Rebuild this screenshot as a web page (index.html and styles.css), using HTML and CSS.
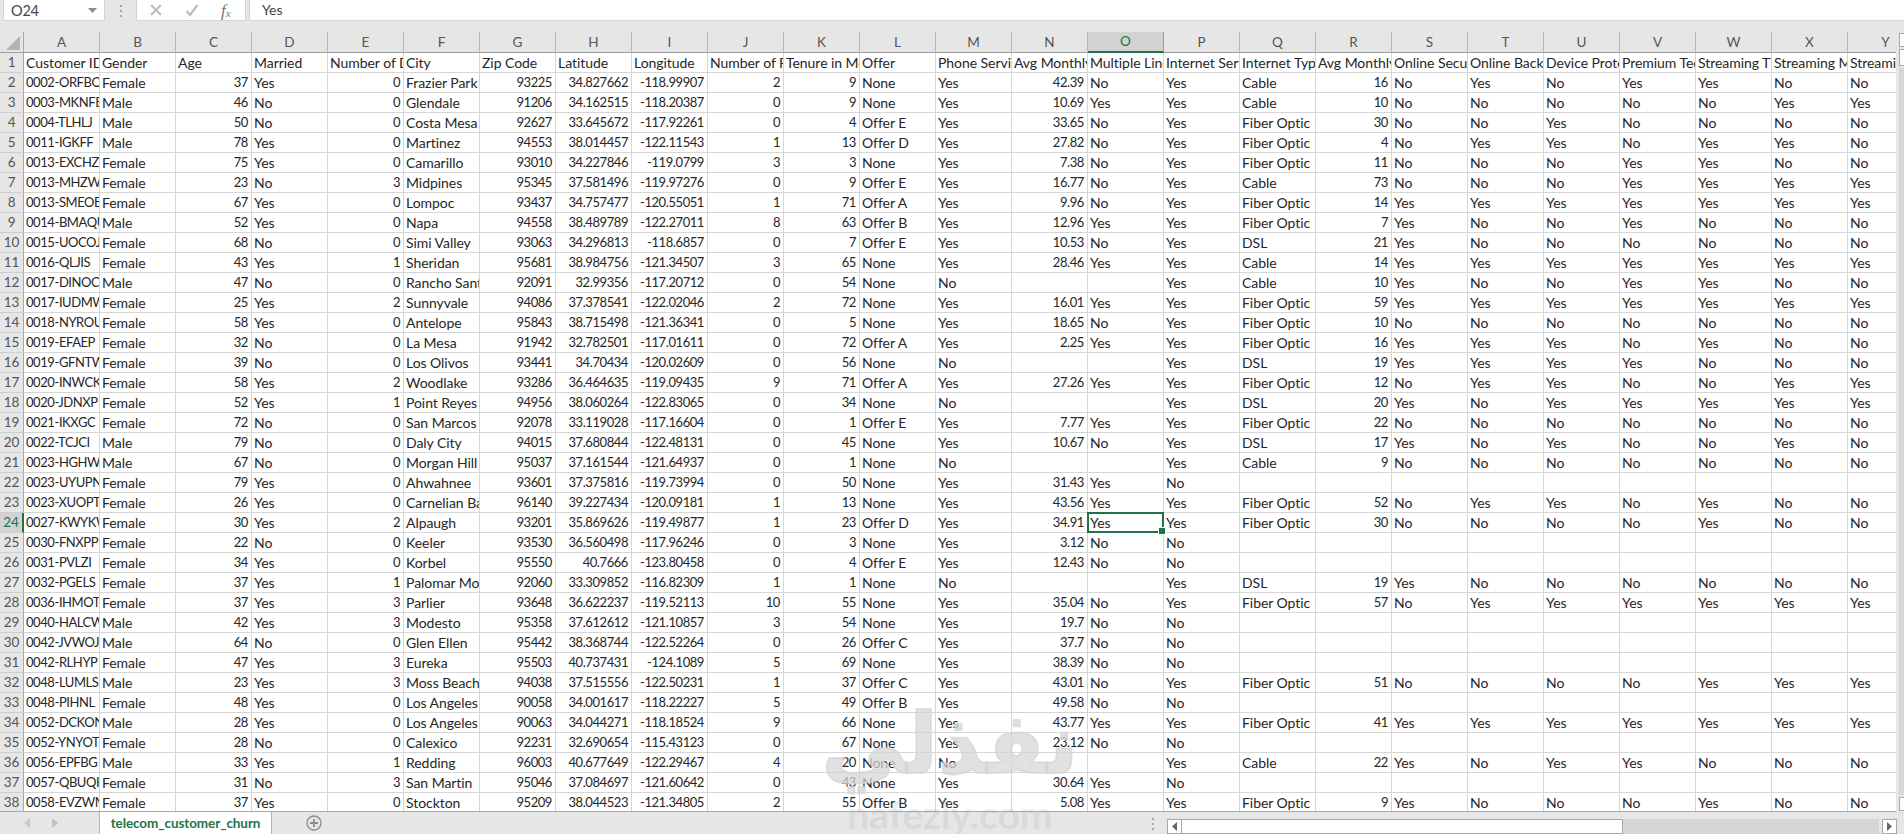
FILE: index.html
```html
<!DOCTYPE html>
<html lang="en">
<head>
<meta charset="utf-8">
<title>telecom_customer_churn</title>
<link rel="stylesheet" href="styles.css">
</head>
<body>
<div class="app">
  <div class="formula-bar">
    <div class="name-box"><span>O24</span><svg class="caret" width="9" height="5" viewBox="0 0 9 5"><path d="M0 0h9L4.500 5z"/></svg></div>
    <div class="grip"><i></i><i></i><i></i></div>
    <div class="fx-box">
      <svg width="14" height="14" viewBox="0 0 14 14"><path d="M2 2l10 10M12 2L2 12" stroke="#bdbdbd" stroke-width="2" fill="none"/></svg>
      <svg width="14" height="14" viewBox="0 0 14 14"><path d="M1.500 8l3.500 4L12.500 2" stroke="#bdbdbd" stroke-width="2.200" fill="none"/></svg>
      <span class="fx">f<sub>x</sub></span>
    </div>
    <div class="formula-input">Yes</div>
  </div>
  <div class="sheet-area">
    <div class="sheet">
      <table class="grid">
        <thead><tr id="head"><th class="corner"><svg width="14" height="14" viewBox="0 0 14 14"><path d="M14 0v14H0z" fill="#b4b4b4"/></svg></th></tr></thead>
        <tbody id="body"></tbody>
      </table>
    </div>
    <div class="vscroll">
      <div class="vbtn"></div>
      <div class="vthumb"></div>
      <div class="vspace"></div>
      <div class="vbtn"></div>
    </div>
  </div>
  <div class="tab-bar">
    <div class="tab-nav">
      <svg width="6" height="10" viewBox="0 0 6 10"><path d="M6 0v10L0 5z" fill="#c8c8c8"/></svg>
      <svg width="6" height="10" viewBox="0 0 6 10"><path d="M0 0v10l6-5z" fill="#c0c0c0"/></svg>
    </div>
    <div class="tab">telecom_customer_churn</div>
    <svg class="add" width="16" height="16" viewBox="0 0 16 16"><circle cx="8" cy="8" r="7" fill="none" stroke="#8a8a8a" stroke-width="1.300"/><path d="M8 4v8M4 8h8" stroke="#8a8a8a" stroke-width="1.800"/></svg>
    <div class="hscroll">
      <div class="grip bottom"><i></i><i></i><i></i></div>
      <div class="hbtn"><svg width="5" height="9" viewBox="0 0 5 9"><path d="M5 0v9L0 4.500z" fill="#666"/></svg></div>
      <div class="hthumb"></div>
      <div class="htrack"></div>
      <div class="hbtn right"><svg width="5" height="9" viewBox="0 0 5 9"><path d="M0 0v9l5-4.500z" fill="#666"/></svg></div>
    </div>
  </div>
  <div class="watermark"><div class="wm-ar" dir="rtl" lang="ar">نفذلي</div><div class="wm-en">nafezly.com</div></div>
</div>
<script src="app.js"></script>
</body>
</html>
```
FILE: styles.css
```css
* { box-sizing: border-box; }
html, body { margin: 0; height: 100%; overflow: hidden; }
body { font-family: "Lato", "Noto Sans", sans-serif; color: #262626; background: #e6e6e6; }
.app { position: relative; display: flex; flex-direction: column; width: 1904px; height: 834px; }

.formula-bar { display: flex; align-items: stretch; height: 32px; padding: 0 0 11px 3px; flex: none; }
.name-box { width: 102px; background: #fff; border: 1px solid #d4d4d4; border-top: 0; display: flex; align-items: center; justify-content: space-between; padding: 0 7px 0 7px; font-size: 14.500px; letter-spacing: -.2px; color: #444; }
.caret path { fill: #8c8c8c; }
.grip { width: 31px; display: flex; flex-direction: column; align-items: center; justify-content: center; gap: 3px; }
.grip i { width: 2px; height: 2px; background: #a6a6a6; display: block; }
.fx-box { width: 110px; background: #fff; border: 1px solid #d4d4d4; border-top: 0; display: flex; align-items: center; gap: 22px; padding-left: 12px; }
.fx { font-family: "Liberation Serif", serif; font-style: italic; font-size: 17px; color: #777; line-height: 1; }
.fx sub { font-size: 11px; vertical-align: -1px; }
.formula-input { flex: 1; margin-left: 3px; background: #fff; border: 1px solid #d4d4d4; border-width: 0 0 1px 1px; padding-left: 12px; font-size: 14px; letter-spacing: -.1px; line-height: 20px; color: #444; }

.sheet-area { display: flex; height: 780px; flex: none; }
.sheet { position: relative; width: 1896px; height: 780px; overflow: hidden; background: #fff; border-bottom: 1px solid #a8a8a8; }

.grid { border-collapse: separate; border-spacing: 0; table-layout: fixed; width: 1924px; font-size: 14px; letter-spacing: -.05px; }
.grid th, .grid td { height: 20px; padding: 0 2px; border-right: 1px solid #d6d6d6; border-bottom: 1px solid #d6d6d6; overflow: hidden; white-space: nowrap; line-height: 19px; font-weight: 400; width: 76px; }
.grid td.num { text-align: right; padding-right: 3px; font-size: 13px; letter-spacing: -.42px; }
.grid td.id { font-size: 13px; letter-spacing: -.42px; }
.grid thead th { background: #e6e6e6; color: #555; text-align: center; border-right-color: #b4b4b4; border-bottom: 1px solid #9c9c9c; font-size: 13.500px; letter-spacing: 0; }
.grid thead th.active { background: #d2d2d2; color: #217346; border-bottom: 2px solid #217346; border-right-color: #9c9c9c; }
.grid th.corner { width: 24px; padding: 2px 3px 0 6px; line-height: 0; text-align: right; border-right-color: #a8a8a8; }
.grid tbody th { width: 24px; background: #e6e6e6; color: #555; text-align: center; padding: 0; border-right-color: #a8a8a8; border-bottom-color: #cfcfcf; font-size: 13.500px; letter-spacing: -.2px; }
.grid tbody th.active { background: #d2d2d2; color: #217346; border-right: 2px solid #217346; }
.grid td.sel { position: relative; overflow: visible; }
.grid td.sel::after { content: ""; position: absolute; left: -1px; top: -1px; right: -1px; bottom: -1px; border: 2px solid #217346; }
.grid td.sel::before { content: ""; position: absolute; right: -3px; bottom: -3px; width: 6px; height: 6px; background: #217346; border: 1px solid #fff; z-index: 2; }

.watermark { position: absolute; left: 820px; top: 692px; width: 260px; text-align: center; pointer-events: none; }
.wm-ar { font-family: "DejaVu Sans", sans-serif; font-weight: 700; font-size: 84px; line-height: 104px; color: rgba(214, 214, 214, .72); -webkit-text-stroke: 2px rgba(214, 214, 214, .72); }
.wm-en { font-size: 39px; line-height: 36px; font-weight: 700; color: rgba(150, 150, 150, .18); }

.vscroll { width: 8px; flex: none; display: flex; flex-direction: column; gap: 2px; padding: 1px 0 1px 3px; background: #e6e6e6; }
.vbtn { height: 14px; background: #fff; border: 1px solid #a8a8a8; border-right: 0; flex: none; }
.vthumb { height: 17px; background: #fff; border: 1px solid #a8a8a8; border-right: 0; flex: none; }
.vspace { flex: 1; background: #d6d6d6; }

.tab-bar { flex: 1; display: flex; align-items: stretch; background: #e6e6e6; }
.tab-nav { width: 99px; display: flex; align-items: center; gap: 22px; padding-left: 24px; }
.tab { width: 173px; background: #fff; border: 1px solid #b4b4b4; border-width: 0 1px; text-align: center; font-weight: 700; font-size: 13.500px; letter-spacing: -.08px; line-height: 22px; color: #217346; }
.add { align-self: center; margin-left: 34px; }
.hscroll { margin-left: auto; width: 766px; display: flex; align-items: flex-end; padding-right: 7px; }
.grip.bottom { width: 29px; height: 20px; flex: none; }
.hbtn { width: 15px; height: 15px; flex: none; background: #fff; border: 1px solid #a8a8a8; display: flex; align-items: center; justify-content: center; }
.hthumb { width: 441px; height: 15px; flex: none; background: #fff; border: 1px solid #a8a8a8; border-left: 0; }
.htrack { flex: 1; height: 15px; background: #d6d6d6; }
.hbtn.right { margin-left: 3px; }
```
FILE: app.js
```js
var headers = ["Customer ID","Gender","Age","Married","Number of Dependents","City","Zip Code","Latitude","Longitude","Number of Referrals","Tenure in Months","Offer","Phone Service","Avg Monthly Long Distance Charges","Multiple Lines","Internet Service","Internet Type","Avg Monthly GB Download","Online Security","Online Backup","Device Protection Plan","Premium Tech Support","Streaming TV","Streaming Movies","Streaming Music"];
var data = `0002-ORFBO,Female,37,Yes,0,Frazier Park,93225,34.827662,-118.99907,2,9,None,Yes,42.39,No,Yes,Cable,16,No,Yes,No,Yes,Yes,No,No
0003-MKNFE,Male,46,No,0,Glendale,91206,34.162515,-118.20387,0,9,None,Yes,10.69,Yes,Yes,Cable,10,No,No,No,No,No,Yes,Yes
0004-TLHLJ,Male,50,No,0,Costa Mesa,92627,33.645672,-117.92261,0,4,Offer E,Yes,33.65,No,Yes,Fiber Optic,30,No,No,Yes,No,No,No,No
0011-IGKFF,Male,78,Yes,0,Martinez,94553,38.014457,-122.11543,1,13,Offer D,Yes,27.82,No,Yes,Fiber Optic,4,No,Yes,Yes,No,Yes,Yes,No
0013-EXCHZ,Female,75,Yes,0,Camarillo,93010,34.227846,-119.0799,3,3,None,Yes,7.38,No,Yes,Fiber Optic,11,No,No,No,Yes,Yes,No,No
0013-MHZWF,Female,23,No,3,Midpines,95345,37.581496,-119.97276,0,9,Offer E,Yes,16.77,No,Yes,Cable,73,No,No,No,Yes,Yes,Yes,Yes
0013-SMEOE,Female,67,Yes,0,Lompoc,93437,34.757477,-120.55051,1,71,Offer A,Yes,9.96,No,Yes,Fiber Optic,14,Yes,Yes,Yes,Yes,Yes,Yes,Yes
0014-BMAQU,Male,52,Yes,0,Napa,94558,38.489789,-122.27011,8,63,Offer B,Yes,12.96,Yes,Yes,Fiber Optic,7,Yes,No,No,Yes,No,No,No
0015-UOCOJ,Female,68,No,0,Simi Valley,93063,34.296813,-118.6857,0,7,Offer E,Yes,10.53,No,Yes,DSL,21,Yes,No,No,No,No,No,No
0016-QLJIS,Female,43,Yes,1,Sheridan,95681,38.984756,-121.34507,3,65,None,Yes,28.46,Yes,Yes,Cable,14,Yes,Yes,Yes,Yes,Yes,Yes,Yes
0017-DINOC,Male,47,No,0,Rancho Santa Fe,92091,32.99356,-117.20712,0,54,None,No,,,Yes,Cable,10,Yes,No,No,Yes,Yes,No,No
0017-IUDMW,Female,25,Yes,2,Sunnyvale,94086,37.378541,-122.02046,2,72,None,Yes,16.01,Yes,Yes,Fiber Optic,59,Yes,Yes,Yes,Yes,Yes,Yes,Yes
0018-NYROU,Female,58,Yes,0,Antelope,95843,38.715498,-121.36341,0,5,None,Yes,18.65,No,Yes,Fiber Optic,10,No,No,No,No,No,No,No
0019-EFAEP,Female,32,No,0,La Mesa,91942,32.782501,-117.01611,0,72,Offer A,Yes,2.25,Yes,Yes,Fiber Optic,16,Yes,Yes,Yes,No,Yes,No,No
0019-GFNTW,Female,39,No,0,Los Olivos,93441,34.70434,-120.02609,0,56,None,No,,,Yes,DSL,19,Yes,Yes,Yes,Yes,No,No,No
0020-INWCK,Female,58,Yes,2,Woodlake,93286,36.464635,-119.09435,9,71,Offer A,Yes,27.26,Yes,Yes,Fiber Optic,12,No,Yes,Yes,No,No,Yes,Yes
0020-JDNXP,Female,52,Yes,1,Point Reyes Station,94956,38.060264,-122.83065,0,34,None,No,,,Yes,DSL,20,Yes,No,Yes,Yes,Yes,Yes,Yes
0021-IKXGC,Female,72,No,0,San Marcos,92078,33.119028,-117.16604,0,1,Offer E,Yes,7.77,Yes,Yes,Fiber Optic,22,No,No,No,No,No,No,No
0022-TCJCI,Male,79,No,0,Daly City,94015,37.680844,-122.48131,0,45,None,Yes,10.67,No,Yes,DSL,17,Yes,No,Yes,No,No,Yes,No
0023-HGHWL,Male,67,No,0,Morgan Hill,95037,37.161544,-121.64937,0,1,None,No,,,Yes,Cable,9,No,No,No,No,No,No,No
0023-UYUPN,Female,79,Yes,0,Ahwahnee,93601,37.375816,-119.73994,0,50,None,Yes,31.43,Yes,No,,,,,,,,,
0023-XUOPT,Female,26,Yes,0,Carnelian Bay,96140,39.227434,-120.09181,1,13,None,Yes,43.56,Yes,Yes,Fiber Optic,52,No,Yes,Yes,No,Yes,No,No
0027-KWYKW,Female,30,Yes,2,Alpaugh,93201,35.869626,-119.49877,1,23,Offer D,Yes,34.91,Yes,Yes,Fiber Optic,30,No,No,No,No,Yes,No,No
0030-FNXPP,Female,22,No,0,Keeler,93530,36.560498,-117.96246,0,3,None,Yes,3.12,No,No,,,,,,,,,
0031-PVLZI,Female,34,Yes,0,Korbel,95550,40.7666,-123.80458,0,4,Offer E,Yes,12.43,No,No,,,,,,,,,
0032-PGELS,Female,37,Yes,1,Palomar Mountain,92060,33.309852,-116.82309,1,1,None,No,,,Yes,DSL,19,Yes,No,No,No,No,No,No
0036-IHMOT,Female,37,Yes,3,Parlier,93648,36.622237,-119.52113,10,55,None,Yes,35.04,No,Yes,Fiber Optic,57,No,Yes,Yes,Yes,Yes,Yes,Yes
0040-HALCW,Male,42,Yes,3,Modesto,95358,37.612612,-121.10857,3,54,None,Yes,19.7,No,No,,,,,,,,,
0042-JVWOJ,Male,64,No,0,Glen Ellen,95442,38.368744,-122.52264,0,26,Offer C,Yes,37.7,No,No,,,,,,,,,
0042-RLHYP,Female,47,Yes,3,Eureka,95503,40.737431,-124.1089,5,69,None,Yes,38.39,No,No,,,,,,,,,
0048-LUMLS,Male,23,Yes,3,Moss Beach,94038,37.515556,-122.50231,1,37,Offer C,Yes,43.01,No,Yes,Fiber Optic,51,No,No,No,No,Yes,Yes,Yes
0048-PIHNL,Female,48,Yes,0,Los Angeles,90058,34.001617,-118.22227,5,49,Offer B,Yes,49.58,No,No,,,,,,,,,
0052-DCKON,Male,28,Yes,0,Los Angeles,90063,34.044271,-118.18524,9,66,None,Yes,43.77,Yes,Yes,Fiber Optic,41,Yes,Yes,Yes,Yes,Yes,Yes,Yes
0052-YNYOT,Female,28,No,0,Calexico,92231,32.690654,-115.43123,0,67,None,Yes,23.12,No,No,,,,,,,,,
0056-EPFBG,Male,33,Yes,1,Redding,96003,40.677649,-122.29467,4,20,None,No,,,Yes,Cable,22,Yes,No,Yes,Yes,No,No,No
0057-QBUQH,Female,31,No,3,San Martin,95046,37.084697,-121.60642,0,43,None,Yes,30.64,Yes,No,,,,,,,,,
0058-EVZWM,Female,37,Yes,0,Stockton,95209,38.044523,-121.34805,2,55,Offer B,Yes,5.08,Yes,Yes,Fiber Optic,9,Yes,No,No,No,Yes,No,No`.split("\n");

var head = document.getElementById("head");
var body = document.getElementById("body");
var ACTIVE_COL = 14, ACTIVE_ROW = 24;

headers.forEach(function (_, i) {
  var th = document.createElement("th");
  th.textContent = String.fromCharCode(65 + i);
  if (i === ACTIVE_COL) th.className = "active";
  head.appendChild(th);
});

function addRow(n, cells) {
  var tr = document.createElement("tr");
  var th = document.createElement("th");
  th.textContent = n;
  if (n === ACTIVE_ROW) th.className = "active";
  tr.appendChild(th);
  cells.forEach(function (text, i) {
    var td = document.createElement("td");
    td.textContent = text;
    var cls = [];
    if (text !== "" && !isNaN(Number(text))) cls.push("num");
    if (n > 1 && i === 0) cls.push("id");
    if (n === ACTIVE_ROW && i === ACTIVE_COL) cls.push("sel");
    if (cls.length) td.className = cls.join(" ");
    tr.appendChild(td);
  });
  body.appendChild(tr);
}

addRow(1, headers);
data.forEach(function (line, i) { addRow(i + 2, line.split(",")); });
```
